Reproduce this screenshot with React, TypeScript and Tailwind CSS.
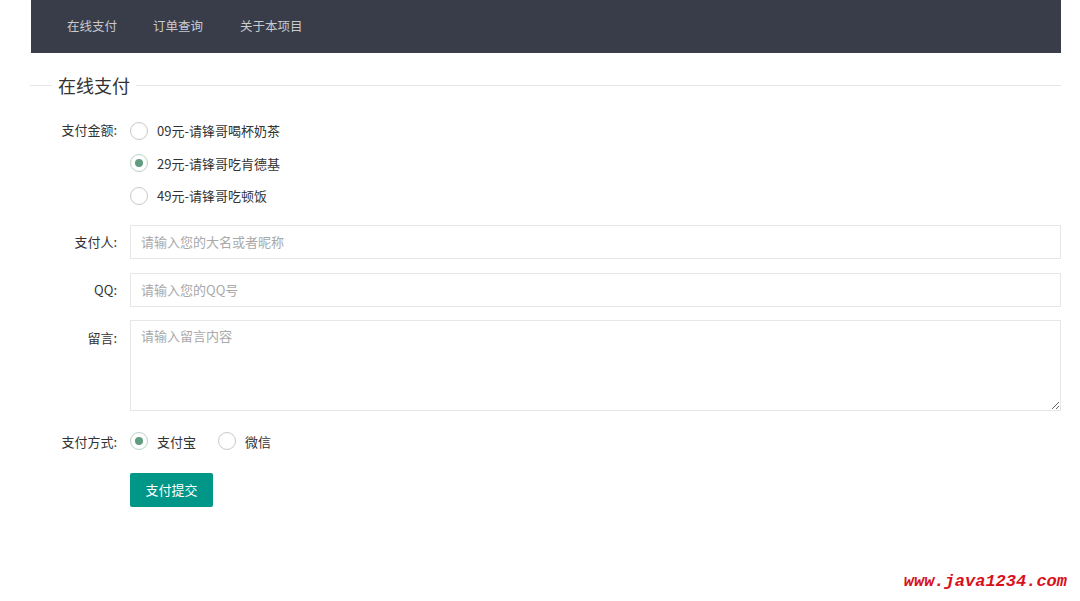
import React, { useState } from 'react';

const amounts = [
	{ value: '9', label: '09元-请锋哥喝杯奶茶' },
	{ value: '29', label: '29元-请锋哥吃肯德基' },
	{ value: '49', label: '49元-请锋哥吃顿饭' },
];

function Radio({
	checked,
	label,
	onClick,
}: {
	checked: boolean;
	label: string;
	onClick: () => void;
}) {
	return (
		<div className="flex items-center cursor-pointer" onClick={onClick}>
			<span
				className={`flex h-[18px] w-[18px] items-center justify-center rounded-full border ${
					checked ? 'border-[#b9d3c5]' : 'border-[#c9c9c9]'
				}`}
			>
				{checked && <span className="h-[8px] w-[8px] rounded-full bg-[#5f9c80]" />}
			</span>
			<span className="ml-[9px] text-[13px] text-[#333]">{label}</span>
		</div>
	);
}

export default function App() {
	const [amount, setAmount] = useState('29');
	const [payType, setPayType] = useState('alipay');

	return (
		<div
			className="relative h-[601px] w-[1080px] overflow-hidden bg-white"
			style={{ fontFamily: '"Noto Sans CJK SC", "Noto Sans", sans-serif' }}
		>
			<div className="ml-[31px] w-[1030px]">
				<div className="flex h-[53px] items-center bg-[#393d49] pl-[36px] text-[12.5px] text-[#c8cad0]">
					<span>在线支付</span>
					<span className="ml-[36px]">订单查询</span>
					<span className="ml-[37px]">关于本项目</span>
				</div>

				<div className="mt-[20px] flex h-[24px] items-center">
					<div className="h-px w-[22px] bg-[#e6e6e6] -ml-[1px]" />
					<span className="px-[6px] text-[18px] leading-[24px] text-[#333]">在线支付</span>
					<div className="h-px flex-1 bg-[#e6e6e6]" />
				</div>

				<div className="mt-[24px] flex">
					<div className="w-[99px] pr-[13px] text-right text-[13px] leading-[18px] text-[#333]">
						支付金额:
					</div>
					<div className="flex flex-col gap-[13px]">
						{amounts.map(a => (
							<Radio
								key={a.value}
								checked={amount === a.value}
								label={a.label}
								onClick={() => setAmount(a.value)}
							/>
						))}
					</div>
				</div>

				<div className="mt-[19px] flex items-center">
					<div className="w-[99px] pr-[13px] text-right text-[13px] text-[#333]">支付人:</div>
					<input
						className="h-[34px] flex-1 border border-[#e6e6e6] px-[10px] text-[13px] outline-none placeholder:text-[#a9a9a9]"
						placeholder="请输入您的大名或者昵称"
					/>
				</div>

				<div className="mt-[14px] flex items-center">
					<div className="w-[99px] pr-[13px] text-right text-[13px] text-[#333]">QQ:</div>
					<input
						className="h-[34px] flex-1 border border-[#e6e6e6] px-[10px] text-[13px] outline-none placeholder:text-[#a9a9a9]"
						placeholder="请输入您的QQ号"
					/>
				</div>

				<div className="mt-[13px] flex">
					<div className="w-[99px] pr-[13px] pt-[8px] text-right text-[13px] text-[#333]">留言:</div>
					<textarea
						className="h-[91px] flex-1 border border-[#e6e6e6] px-[10px] py-[5px] text-[13px] outline-none placeholder:text-[#a9a9a9]"
						placeholder="请输入留言内容"
					/>
				</div>

				<div className="mt-[21px] flex items-center">
					<div className="w-[99px] pr-[13px] text-right text-[13px] text-[#333]">支付方式:</div>
					<div className="flex items-center gap-[22px]">
						<Radio
							checked={payType === 'alipay'}
							label="支付宝"
							onClick={() => setPayType('alipay')}
						/>
						<Radio
							checked={payType === 'wechat'}
							label="微信"
							onClick={() => setPayType('wechat')}
						/>
					</div>
				</div>

				<div className="mt-[22px] pl-[99px]">
					<button className="h-[34px] w-[83px] rounded-[2px] bg-[#009688] text-[13px] text-white">
						支付提交
					</button>
				</div>
			</div>

			<div
				className="absolute right-[13px] top-[569px] text-[17px] font-bold italic text-[#d8111b]"
				style={{ fontFamily: '"Liberation Mono", monospace' }}
			>
				www.java1234.com
			</div>
		</div>
	);
}
